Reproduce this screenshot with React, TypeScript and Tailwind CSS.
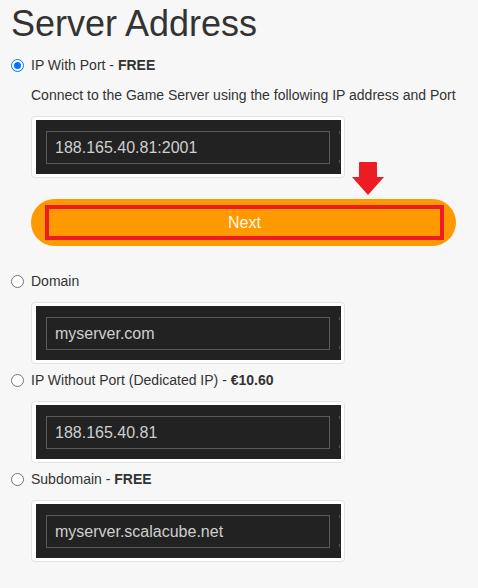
import React from 'react';

type Option = {
  label: string;
  price?: string;
  checked?: boolean;
};

function Radio({ checked }: { checked?: boolean }) {
  if (checked) {
    return (
      <span className="flex h-[13px] w-[13px] shrink-0 items-center justify-center rounded-full border-[1.5px] border-[#0075ff] bg-white">
        <span className="h-[7px] w-[7px] rounded-full bg-[#0075ff]" />
      </span>
    );
  }
  return <span className="h-[13px] w-[13px] shrink-0 rounded-full border border-[#767676] bg-white" />;
}

function OptionRow({ label, price, checked }: Option) {
  return (
    <div className="flex h-5 items-center gap-[7px] text-[14px] leading-5">
      <Radio checked={checked} />
      <span>
        {label}
        {price && (
          <>
            {' - '}
            <b className="font-bold">{price}</b>
          </>
        )}
      </span>
    </div>
  );
}

// screenshot-style card with a dark input inside
function AddressShot({ value }: { value: string }) {
  return (
    <div className="ml-[20px] w-[314px] rounded-[4px] border border-[#e3e3e3] bg-white pb-[3px] pl-[4px] pr-[3px] pt-[3px]">
      <div className="relative flex h-[54px] w-[305px] items-center bg-[#222222] px-[10px]">
        <div className="flex h-[33px] w-[284px] items-center border-[1.5px] border-[#5a5a5a] pl-[8px] pt-[1px] text-[16px] text-[#cfcfcf]">
          {value}
        </div>
        <span className="absolute right-[1px] top-[11px] h-[3px] w-[1px] bg-[#555]" />
        <span className="absolute bottom-[11px] right-[1px] h-[3px] w-[1px] bg-[#555]" />
      </div>
    </div>
  );
}

export default function App() {
  return (
    <div className="min-h-screen bg-[#f7f7f7] pl-[11px] font-['Liberation_Sans',Arial,sans-serif] text-[#333]">
      <h1 className="pt-[6px] text-[36px] font-normal leading-[35px] text-[#333]">Server Address</h1>

      <div className="mt-[14px]">
        <OptionRow label="IP With Port" price="FREE" checked />
      </div>
      <p className="ml-[20px] mt-[10px] h-5 text-[14px] leading-5">
        Connect to the Game Server using the following IP address and Port
      </p>
      <div className="mt-[11px]">
        <AddressShot value="188.165.40.81:2001" />
      </div>

      {/* Next button with pointer arrow */}
      <div className="relative ml-[20px] mt-[21px] flex h-[47px] w-[425px] items-center rounded-full bg-[#ff9900] pl-[14px] pr-[12px]">
        <div className="flex h-[35px] w-full items-center justify-center border-4 border-[#ed1c24] text-[16px] text-[#fffbe8]">
          Next
        </div>
        <svg className="absolute left-[320px] top-[-37px]" width="34" height="34" viewBox="0 0 34 34">
          <path d="M8 1 Q8 0 9 0 H25 Q26 0 26 1 V15 H33 L17 33 L1 15 H8 Z" fill="#ed1c24" />
        </svg>
      </div>

      <div className="mt-[25px]">
        <OptionRow label="Domain" />
      </div>
      <div className="mt-[11px]">
        <AddressShot value="myserver.com" />
      </div>

      <div className="mt-[6px]">
        <OptionRow label="IP Without Port (Dedicated IP)" price="€10.60" />
      </div>
      <div className="mt-[11px]">
        <AddressShot value="188.165.40.81" />
      </div>

      <div className="mt-[6px]">
        <OptionRow label="Subdomain" price="FREE" />
      </div>
      <div className="mt-[11px]">
        <AddressShot value="myserver.scalacube.net" />
      </div>
    </div>
  );
}
